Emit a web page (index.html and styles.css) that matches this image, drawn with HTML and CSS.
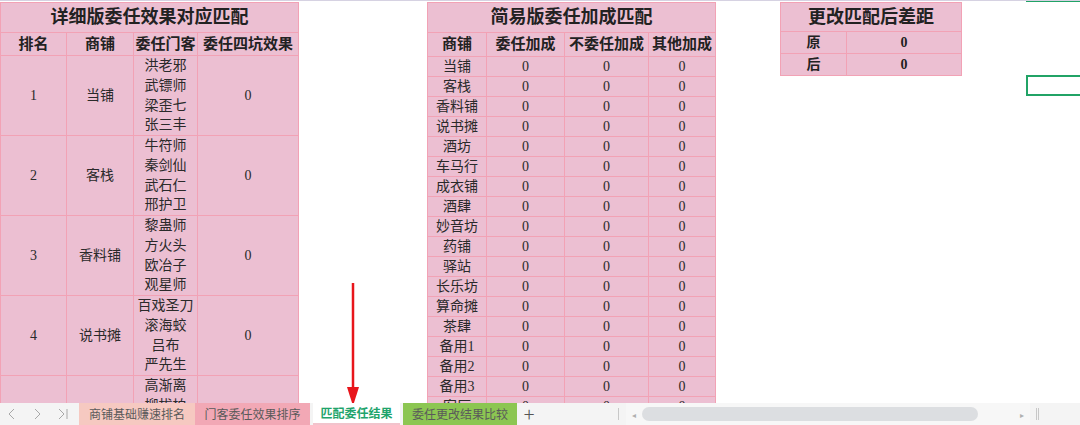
FILE: index.html
```html
<!DOCTYPE html>
<html lang="zh-CN">
<head>
  <meta charset="UTF-8">
  <meta name="viewport" content="width=device-width, initial-scale=1.0">
  <title>匹配委任结果</title>
  <link rel="stylesheet" href="styles.css">
</head>
<body>
  <div class="workbook">
    <div class="sheet">
      <!-- 详细版：每个商铺对应四位门客 -->
      <table class="grid detail">
        <colgroup>
          <col style="width:66px"><col style="width:67px"><col style="width:64px"><col style="width:101px">
        </colgroup>
        <tr class="title"><td colspan="4">详细版委任效果对应匹配</td></tr>
        <tr class="head"><td>排名</td><td>商铺</td><td>委任门客</td><td>委任四坑效果</td></tr>
        <tr class="block"><td>1</td><td>当铺</td><td class="names">洪老邪<br>武镖师<br>梁歪七<br>张三丰</td><td>0</td></tr>
        <tr class="block"><td>2</td><td>客栈</td><td class="names">牛符师<br>秦剑仙<br>武石仁<br>邢护卫</td><td>0</td></tr>
        <tr class="block"><td>3</td><td>香料铺</td><td class="names">黎蛊师<br>方火头<br>欧冶子<br>观星师</td><td>0</td></tr>
        <tr class="block"><td>4</td><td>说书摊</td><td class="names">百戏圣刀<br>滚海蛟<br>吕布<br>严先生</td><td>0</td></tr>
        <tr class="block"><td>5</td><td>酒坊</td><td class="names">高渐离<br>柳拔柏<br>南宫婉<br>石敢当</td><td>0</td></tr>
      </table>

      <!-- 简易版：每个商铺的三项加成 -->
      <table class="grid simple">
        <colgroup>
          <col style="width:59px"><col style="width:78px"><col style="width:84px"><col style="width:67px">
        </colgroup>
        <tr class="title"><td colspan="4">简易版委任加成匹配</td></tr>
        <tr class="head"><td>商铺</td><td>委任加成</td><td>不委任加成</td><td>其他加成</td></tr>
        <tr><td>当铺</td><td>0</td><td>0</td><td>0</td></tr>
        <tr><td>客栈</td><td>0</td><td>0</td><td>0</td></tr>
        <tr><td>香料铺</td><td>0</td><td>0</td><td>0</td></tr>
        <tr><td>说书摊</td><td>0</td><td>0</td><td>0</td></tr>
        <tr><td>酒坊</td><td>0</td><td>0</td><td>0</td></tr>
        <tr><td>车马行</td><td>0</td><td>0</td><td>0</td></tr>
        <tr><td>成衣铺</td><td>0</td><td>0</td><td>0</td></tr>
        <tr><td>酒肆</td><td>0</td><td>0</td><td>0</td></tr>
        <tr><td>妙音坊</td><td>0</td><td>0</td><td>0</td></tr>
        <tr><td>药铺</td><td>0</td><td>0</td><td>0</td></tr>
        <tr><td>驿站</td><td>0</td><td>0</td><td>0</td></tr>
        <tr><td>长乐坊</td><td>0</td><td>0</td><td>0</td></tr>
        <tr><td>算命摊</td><td>0</td><td>0</td><td>0</td></tr>
        <tr><td>茶肆</td><td>0</td><td>0</td><td>0</td></tr>
        <tr><td>备用1</td><td>0</td><td>0</td><td>0</td></tr>
        <tr><td>备用2</td><td>0</td><td>0</td><td>0</td></tr>
        <tr><td>备用3</td><td>0</td><td>0</td><td>0</td></tr>
        <tr><td>客厅</td><td>0</td><td>0</td><td>0</td></tr>
      </table>

      <!-- 更改前后的差距 -->
      <table class="grid diff">
        <colgroup>
          <col style="width:66px"><col style="width:115px">
        </colgroup>
        <tr class="title"><td colspan="2">更改匹配后差距</td></tr>
        <tr><td>原</td><td>0</td></tr>
        <tr><td>后</td><td>0</td></tr>
      </table>

      <div class="cursor cursor-top"></div>
      <div class="cursor"></div>

      <svg class="pointer" width="16" height="124" viewBox="0 0 16 124">
        <line x1="8" y1="0" x2="8" y2="108" stroke="#e8151b" stroke-width="2.5"/>
        <polygon points="2,104 14,104 8,123" fill="#e8151b"/>
      </svg>
    </div>

    <div class="tabbar">
      <div class="nav">
        <svg width="10" height="12" viewBox="0 0 10 12"><polyline points="7,1 2,6 7,11" fill="none" stroke="#a8a8a8" stroke-width="1"/></svg>
        <svg width="10" height="12" viewBox="0 0 10 12"><polyline points="3,1 8,6 3,11" fill="none" stroke="#a8a8a8" stroke-width="1"/></svg>
        <svg width="12" height="12" viewBox="0 0 12 12"><polyline points="2,1 7,6 2,11" fill="none" stroke="#a8a8a8" stroke-width="1"/><line x1="10" y1="1" x2="10" y2="11" stroke="#a8a8a8" stroke-width="1"/></svg>
      </div>
      <div class="tab tab-salmon">商铺基础赚速排名</div>
      <div class="tab tab-rose">门客委任效果排序</div>
      <div class="tab active">匹配委任结果</div>
      <div class="tab tab-green">委任更改结果比较</div>
      <div class="add">+</div>
      <div class="split"></div>
      <div class="hscroll">
        <span class="arrow">&#9666;</span>
        <div class="thumb"></div>
        <span class="arrow right">&#9656;</span>
      </div>
      <div class="split double"></div>
    </div>
  </div>
</body>
</html>
```

FILE: styles.css
```css
html, body {
  margin: 0;
  padding: 0;
  background: #fff;
}

.workbook {
  width: 1080px;
  height: 425px;
  display: flex;
  flex-direction: column;
  overflow: hidden;
}

.sheet {
  position: relative;
  height: 403px;
  box-sizing: border-box;
  border-top: 1px solid #d6d2e2;
  padding-top: 1px;
  display: flex;
  align-items: flex-start;
  overflow: hidden;
}

/* pink cell blocks */
.grid {
  border-collapse: collapse;
  table-layout: fixed;
  background: #ecbfd2;
  font-family: "Liberation Serif", "Noto Sans CJK SC", serif;
  font-size: 14px;
  color: #2a2a2a;
  flex-shrink: 0;
}
.grid td {
  border: 1px solid #f2a2b5;
  padding: 0;
  text-align: center;
  vertical-align: middle;
  line-height: 19px;
  height: 19px;
  white-space: nowrap;
  overflow: hidden;
}
.grid .title td {
  height: 29px;
  font-size: 18px;
  font-weight: bold;
  color: #222;
}
.grid .head td {
  height: 22px;
  font-size: 15px;
  font-weight: bold;
  color: #222;
}

.detail {
  width: 298px;
}
.detail .block td {
  height: 78px;
}
.detail .names {
  line-height: 19.75px;
}

.simple {
  width: 288px;
  margin-left: 128px;
}
.simple .head td {
  height: 23px;
}

.diff {
  width: 181px;
  margin-left: 64px;
  font-weight: bold;
}
.diff td {
  height: 21px;
  color: #222;
}
.diff .title td {
  height: 28px;
}

/* active cell outline */
.cursor {
  position: absolute;
  left: 1026px;
  top: 74px;
  width: 54px;
  height: 21px;
  box-sizing: border-box;
  border: 2px solid #21a366;
  border-right: none;
}
.cursor-top {
  top: -2px;
  height: 3px;
  border-top: none;
}

.pointer {
  position: absolute;
  left: 345px;
  top: 282px;
}

/* sheet tabs */
.tabbar {
  height: 22px;
  display: flex;
  align-items: stretch;
  background: #f4f4f4;
  font-family: "Noto Sans CJK SC", "Noto Sans", sans-serif;
  font-size: 12px;
  color: #5a5a5a;
}
.nav {
  width: 79px;
  display: flex;
  align-items: center;
  gap: 15px;
  padding-left: 7px;
  box-sizing: border-box;
}
.tab {
  width: 116px;
  display: flex;
  align-items: center;
  justify-content: center;
  line-height: 1;
}
.tab-salmon {
  background: #f6c9c1;
}
.tab-rose {
  background: #f2a8b5;
  width: 115px;
}
.tab.active {
  width: 87px;
  margin: 0 3px;
  background: #fff;
  color: #1fa46c;
  font-weight: bold;
  border-bottom: 2px solid #f2c3cc;
  box-sizing: border-box;
}
.tab-green {
  background: #8cc652;
  width: 114px;
}
.add {
  width: 24px;
  text-align: center;
  font-size: 20px;
  line-height: 21px;
  color: #555;
  font-weight: 300;
}
.split {
  width: 1px;
  margin: 5px 0 5px 77px;
  background: #c8c8c8;
}
.hscroll {
  width: 392px;
  margin-left: 7px;
  display: flex;
  align-items: center;
  gap: 6px;
  padding: 0 6px;
  background: #f7f7f7;
}
.hscroll .arrow {
  font-size: 8px;
  color: #b0b0b0;
}
.thumb {
  width: 336px;
  height: 14px;
  border-radius: 7px;
  background: #dcdee1;
}
.hscroll .right {
  margin-left: auto;
}
.split.double {
  margin-left: 6px;
  width: 3px;
  background: none;
  border-left: 1px solid #c8c8c8;
  border-right: 1px solid #c8c8c8;
  box-sizing: border-box;
}
```
